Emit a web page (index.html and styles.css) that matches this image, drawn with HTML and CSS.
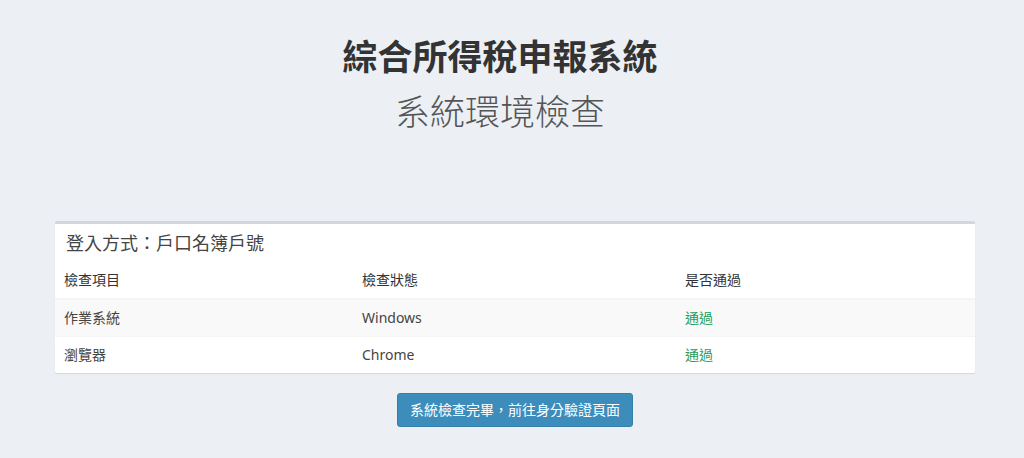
FILE: index.html
```html
<!DOCTYPE html>
<html lang="zh-Hant">

<head>
    <meta charset="UTF-8">
    <meta name="viewport" content="width=device-width, initial-scale=1.0">
    <title>系統環境檢查</title>
    <link rel="stylesheet" href="styles.css">
</head>

<body>
    <div class="page-header">
        <h1 class="title">綜合所得稅申報系統</h1>
        <h2 class="subtitle">系統環境檢查</h2>
    </div>

    <div class="content">
        <div class="box">
            <div class="box-header">登入方式：戶口名簿戶號</div>
            <table class="table">
                <thead>
                    <tr>
                        <th class="col-item">檢查項目</th>
                        <th class="col-status">檢查狀態</th>
                        <th>是否通過</th>
                    </tr>
                </thead>
                <tbody>
                    <tr class="striped">
                        <td>作業系統</td>
                        <td>Windows</td>
                        <td class="text-success">通過</td>
                    </tr>
                    <tr>
                        <td>瀏覽器</td>
                        <td>Chrome</td>
                        <td class="text-success">通過</td>
                    </tr>
                </tbody>
            </table>
        </div>

        <div class="actions">
            <button class="btn-primary">系統檢查完畢，前往身分驗證頁面</button>
        </div>
    </div>
</body>

</html>
```

FILE: styles.css
```css
body {
    margin: 0;
    background-color: #ecf0f5;
    font-family: "Noto Sans", "Noto Sans CJK TC", sans-serif;
    color: #333;
}

.page-header {
    text-align: center;
    padding-top: 38px;
    padding-right: 24px;
}

.title {
    margin: 0;
    font-size: 35px;
    line-height: 1.1;
    font-weight: 700;
    color: #333;
}

.subtitle {
    margin: 16px 0 0;
    font-size: 35px;
    line-height: 1.1;
    font-weight: 300;
    color: #555;
}

.content {
    padding: 0 49px 0 55px;
    margin-top: 90px;
}

.box {
    background: #fff;
    border-top: 3px solid #d2d6de;
    border-radius: 2px;
    box-shadow: 0 1px 1px rgba(0, 0, 0, 0.1);
}

.box-header {
    padding: 10px 11px;
    font-size: 18px;
    line-height: 1;
    color: #444;
}

.table {
    width: 100%;
    border-collapse: collapse;
    font-size: 14px;
}

.table th,
.table td {
    padding: 8px 9px;
    line-height: 20px;
    text-align: left;
    font-weight: 400;
}

.table th {
    border-bottom: 2px solid #f4f4f4;
    color: #333;
}

.table td {
    border-top: 1px solid #f4f4f4;
    color: #444;
}

.col-item {
    width: 280px;
}

.col-status {
    width: 305px;
}

.striped {
    background-color: #f9f9f9;
}

.table .text-success {
    color: #1f9d5c;
}

.actions {
    text-align: center;
    margin-top: 20px;
}

.btn-primary {
    background-color: #3c8dbc;
    border: 1px solid #367fa9;
    border-radius: 3px;
    color: #fff;
    font-family: "Noto Sans", "Noto Sans CJK TC", sans-serif;
    font-size: 14px;
    line-height: 20px;
    padding: 6px 12px;
}
```
